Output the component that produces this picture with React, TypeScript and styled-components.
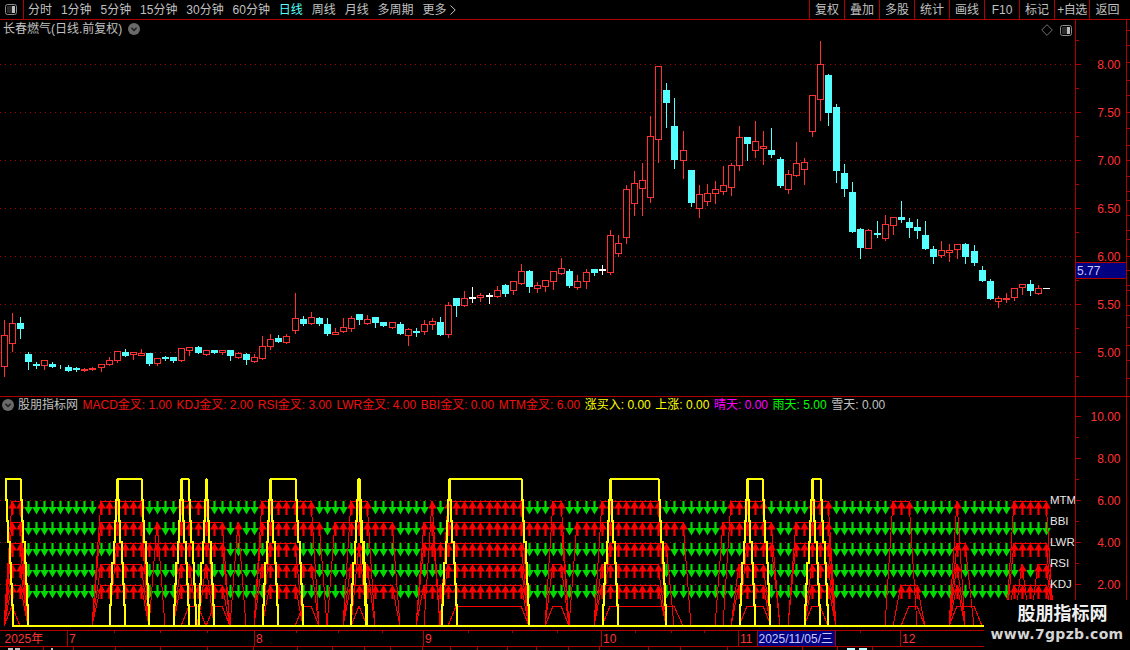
import React from "react";
import styled, { createGlobalStyle } from "styled-components";

const FONT = '"Liberation Sans", "Noto Sans CJK SC", sans-serif';
const RULE = "#b00000";
const UP = "#ff3232";
const DOWN = "#54ffff";

const Global = createGlobalStyle`
  html, body { margin: 0; padding: 0; background: #000; }
`;

const Screen = styled.div`
  position: relative;
  width: 1130px;
  height: 650px;
  overflow: hidden;
  background: #000;
  color: #c0c0c0;
  font: 12px/1 ${FONT};
  display: flex;
  flex-direction: column;
`;

const Toolbar = styled.div`
  height: 20px;
  flex: none;
  box-sizing: border-box;
  border-bottom: 1px solid ${RULE};
  display: flex;
  align-items: stretch;
`;
const ToggleCell = styled.div`
  width: 24px;
  box-sizing: border-box;
  border-right: 1px solid ${RULE};
  padding-left: 5px;
  display: flex;
  align-items: center;
`;
const Periods = styled.div`
  flex: 1;
  display: flex;
  align-items: center;
  gap: 8.9px;
  padding-left: 4px;
`;
const Period = styled.span<{ $active?: boolean }>`
  color: ${(p) => (p.$active ? "#54ffff" : "#c0c0c0")};
  display: inline-flex;
  align-items: center;
  gap: 4px;
`;
const Actions = styled.div`
  display: flex;
  align-items: stretch;
`;
const Action = styled.div<{ $last?: boolean; $tight?: boolean }>`
  width: ${(p) => (p.$last ? "41px" : "35px")};
  box-sizing: border-box;
  border-left: 1px solid ${RULE};
  padding-right: ${(p) => (p.$last ? "5px" : "0")};
  letter-spacing: ${(p) => (p.$tight ? "-0.5px" : "0")};
  display: flex;
  align-items: center;
  justify-content: center;
  white-space: nowrap;
`;

const Panel = styled.div<{ $h: number }>`
  position: relative;
  flex: none;
  height: ${(p) => p.$h}px;
`;
const ChartSvg = styled.svg`
  display: block;
  width: 1130px;
  height: 100%;
`;
const StockTitle = styled.div`
  position: absolute;
  left: 3px;
  top: 3px;
  display: flex;
  align-items: center;
  gap: 6px;
  height: 12px;
  white-space: nowrap;
`;
const CornerIcons = styled.div`
  position: absolute;
  right: 58px;
  top: 4px;
  display: flex;
  align-items: center;
  gap: 7px;
`;
const Legend = styled.div`
  position: absolute;
  left: 2px;
  top: 2px;
  display: flex;
  align-items: center;
  height: 12px;
  white-space: nowrap;
`;
const LegendName = styled.span`
  margin: 0 4.5px 0 4px;
  color: #c0c0c0;
`;
const LegendItem = styled.span<{ $c: string }>`
  color: ${(p) => p.$c};
  margin-right: 4.6px;
`;
const Watermark = styled.div`
  position: absolute;
  left: 984px;
  top: 600px;
  width: 146px;
  height: 50px;
  background: #000;
  display: flex;
  flex-direction: column;
  align-items: center;
`;
const MarkName = styled.div`
  margin: 1px 0 0 11px;
  font: bold 18px/22px "Noto Sans CJK SC", sans-serif;
  color: #f0f0f0;
`;
const MarkUrl = styled.div`
  margin-top: 3px;
  font: bold 14px/16px "DejaVu Sans", sans-serif;
  color: #d4d4d4;
  letter-spacing: 0.3px;
`;

const Rule = styled.line`
  stroke: ${RULE};
  stroke-width: 1;
  shape-rendering: crispEdges;
`;
const Grid = styled.line`
  stroke: #b00000;
  stroke-width: 1;
  stroke-dasharray: 1 4;
  shape-rendering: crispEdges;
`;
const AxisLabel = styled.text`
  fill: #ff3232;
  font: 12px ${FONT};
  text-anchor: end;
`;
const TimeLabel = styled.text`
  fill: #ff3232;
  font: 12px ${FONT};
`;
const DateText = styled.text`
  fill: #c8c8ff;
  font: 12px ${FONT};
`;
const Wick = styled.line<{ $c: string }>`
  stroke: ${(p) => p.$c};
  stroke-width: 1;
  shape-rendering: crispEdges;
`;
const Body = styled.rect<{ $c: string; $hollow: boolean }>`
  stroke: ${(p) => p.$c};
  fill: ${(p) => (p.$hollow ? "#000" : p.$c)};
  stroke-width: 1;
  shape-rendering: crispEdges;
`;
const NavyBox = styled.rect`
  fill: #000080;
`;
const Arrow = styled.polygon<{ $c: string }>`
  fill: ${(p) => p.$c};
`;
const SignalLine = styled.polyline`
  fill: none;
  stroke: #ff0000;
  stroke-width: 1;
  shape-rendering: crispEdges;
`;
const YellowLine = styled.path`
  fill: none;
  stroke: #ffff00;
  stroke-width: 2;
  shape-rendering: crispEdges;
`;
const RowTag = styled.text`
  fill: #e8e8e8;
  font: 11.5px ${FONT};
`;
const Crumb = styled.rect<{ $c: string }>`
  fill: ${(p) => p.$c};
`;

const PanelIcon = () => (
  <svg width="12" height="11" viewBox="0 0 12 11">
    <rect x="0.5" y="0.5" width="11" height="10" rx="2" fill="none" stroke="#8c8c8c" />
    <rect x="7" y="2" width="3" height="7" fill="#bdbdbd" />
    <rect x="2" y="2" width="5" height="7" fill="#2a2a2a" />
  </svg>
);
const Diamond = () => (
  <svg width="12" height="12" viewBox="0 0 12 12">
    <path d="M6 .7 11.3 6 6 11.3 .7 6Z" fill="none" stroke="#707070" />
  </svg>
);
const ChevronDot = () => (
  <svg width="12" height="12" viewBox="0 0 12 12" style={{ flex: "none" }}>
    <circle cx="6" cy="6" r="6" fill="#6a6a6a" />
    <path d="M3.4 4.8 6 7.4 8.6 4.8" fill="none" stroke="#1a1a1a" strokeWidth="1.4" />
  </svg>
);
const Caret = () => (
  <svg width="6" height="10" viewBox="0 0 6 10">
    <path d="M.5.5 5.2 5 .5 9.5" fill="none" stroke="#c0c0c0" />
  </svg>
);

type Tone = "r" | "c" | "w";
type Row = [Tone, number, number, number, number];
const seg = (oy: number, rows: Row[]): Row[] =>
  rows.map(([t, a, b, c, d]) => [
    t,
    Math.floor(oy + a / 3),
    Math.floor(oy + b / 3),
    Math.floor(oy + c / 3),
    Math.floor(oy + d / 3),
  ]);

const candles: Row[] = [
  ...seg(250, [
    ["r", 210, 256, 350, 380], ["r", 190, 220, 281, 305], ["c", 202, 220, 234, 264], ["c", 308, 312, 333, 357],
    ["c", 336, 342, 345, 354], ["r", 331, 331, 347, 357], ["c", 338, 342, 348, 351], ["c", 345, 345, 347, 354],
    ["c", 346, 351, 360, 363], ["c", 353, 356, 358, 363], ["r", 354, 357, 362, 363], ["r", 351, 354, 359, 360],
    ["r", 342, 343, 353, 363], ["r", 321, 331, 344, 345], ["r", 303, 304, 332, 336], ["c", 297, 306, 315, 318],
    ["r", 306, 307, 312, 327], ["r", 297, 309, 315, 316], ["c", 309, 309, 339, 345], ["r", 324, 325, 341, 345],
    ["c", 318, 323, 326, 332], ["c", 321, 321, 330, 336], ["r", 295, 295, 332, 333], ["r", 292, 292, 302, 315],
    ["c", 288, 291, 306, 309], ["r", 301, 301, 314, 315], ["c", 300, 300, 306, 309], ["r", 301, 301, 308, 312],
    ["c", 300, 300, 315, 330], ["r", 306, 310, 323, 324], ["c", 309, 312, 327, 342], ["r", 312, 322, 335, 336],
    ["r", 258, 289, 326, 329], ["r", 252, 268, 290, 297], ["c", 255, 264, 273, 276], ["r", 252, 259, 278, 279],
    ["r", 129, 205, 242, 249], ["c", 198, 207, 219, 225], ["r", 186, 202, 221, 222], ["c", 202, 204, 219, 225],
    ["c", 204, 222, 249, 255], ["r", 234, 246, 252, 252], ["r", 204, 232, 245, 246], ["r", 198, 205, 236, 243],
    ["c", 192, 192, 207, 222], ["r", 195, 208, 221, 222], ["c", 201, 201, 216, 231],
  ]),
  ...seg(230, [
    ["c", 276, 276, 285, 290], ["r", 276, 277, 293, 294], ["c", 276, 282, 309, 312], ["r", 294, 297, 317, 345],
    ["c", 294, 305, 308, 318], ["r", 270, 283, 305, 312], ["r", 264, 274, 282, 297], ["c", 261, 276, 312, 315],
    ["r", 216, 226, 314, 321], ["c", 204, 204, 225, 258], ["r", 183, 205, 227, 228], ["w", 171, 203, 206, 216],
    ["r", 189, 196, 201, 213], ["w", 189, 195, 198, 219], ["r", 168, 181, 200, 201], ["c", 162, 165, 189, 198],
    ["r", 153, 154, 182, 192], ["r", 102, 124, 161, 162], ["c", 120, 123, 168, 186], ["r", 156, 166, 176, 186],
    ["r", 150, 151, 170, 183], ["r", 124, 124, 155, 177], ["r", 84, 115, 131, 132], ["c", 117, 123, 165, 171],
    ["r", 135, 154, 173, 177], ["r", 117, 127, 155, 174], ["c", 117, 117, 126, 135], ["w", 105, 119, 122, 132],
    ["r", 0, 16, 128, 132], ["r", 15, 40, 71, 78],
  ]),
  ...seg(30, [
    ["r", 465, 478, 623, 641], ["r", 423, 460, 521, 555], ["r", 399, 451, 476, 555], ["r", 258, 319, 503, 516],
    ["r", 108, 109, 329, 396], ["c", 159, 180, 216, 291], ["c", 204, 288, 387, 414], ["r", 303, 361, 392, 444],
    ["c", 420, 420, 516, 528], ["r", 465, 493, 536, 561], ["r", 462, 490, 513, 525], ["r", 453, 478, 491, 519],
    ["r", 408, 466, 485, 492], ["r", 399, 406, 473, 495], ["r", 288, 322, 407, 420], ["c", 321, 321, 339, 390],
    ["r", 273, 334, 362, 381], ["r", 303, 349, 356, 402], ["c", 294, 360, 372, 381], ["c", 381, 387, 465, 471],
    ["r", 420, 433, 479, 489], ["r", 336, 400, 437, 438], ["r", 384, 397, 419, 462], ["r", 195, 196, 305, 318],
    ["r", 33, 103, 209, 270], ["c", 132, 135, 246, 285], ["c", 222, 231, 420, 456], ["c", 402, 429, 474, 498],
    ["c", 456, 486, 603, 606],
  ]),
  ...seg(180, [
    ["c", 144, 147, 201, 234], ["r", 148, 151, 204, 204], ["c", 123, 159, 162, 171], ["r", 105, 133, 174, 180],
    ["r", 112, 112, 137, 162], ["c", 63, 111, 117, 126], ["c", 114, 126, 141, 171], ["c", 117, 141, 150, 174],
    ["c", 123, 165, 204, 207], ["c", 198, 207, 228, 249], ["r", 183, 211, 225, 231], ["r", 192, 210, 216, 243],
    ["r", 193, 193, 209, 234], ["c", 189, 192, 228, 249], ["c", 195, 213, 246, 255], ["c", 258, 270, 300, 303],
    ["c", 297, 303, 354, 357], ["r", 348, 355, 365, 381], ["r", 339, 354, 359, 366], ["r", 324, 325, 353, 360],
    ["r", 312, 313, 323, 342], ["c", 300, 312, 330, 345], ["r", 315, 325, 341, 342],
  ]),
];

const xAt = (i: number) => 4 + 8 * i + Math.floor(i / 12);
const toneColor: Record<Tone, string> = { r: UP, c: DOWN, w: "#ffffff" };

type Span = [number, number];
const series: { name: string; y: number; on: Span[] }[] = [
  { name: "MTM", y: 501, on: [[1,2],[12,17],[22,25],[32,38],[43,45],[53,53],[55,64],[68,69],[74,81],[90,94],[100,102],[110,112],[118,118],[125,129]] },
  { name: "BBI", y: 522, on: [[1,2],[12,17],[19,19],[22,27],[29,29],[32,39],[41,48],[52,53],[55,69],[71,84],[89,95],[98,102]] },
  { name: "LWR", y: 543, on: [[1,2],[14,27],[33,36],[44,44],[52,64],[75,82],[92,95],[98,102],[118,119],[125,129]] },
  { name: "RSI", y: 564, on: [[1,2],[12,17],[22,23],[25,25],[32,38],[43,45],[55,64],[68,69],[74,81],[91,94],[100,102],[118,118],[126,126],[128,129]] },
  { name: "KDJ", y: 585, on: [[1,2],[12,17],[22,27],[33,36],[43,48],[52,64],[74,81],[91,94],[100,102],[111,113],[118,118],[125,129]] },
];
const macdOn: Span[] = [[1,1],[23,24],[26,27],[37,38],[44,44],[56,64],[68,69],[75,83],[92,94],[100,101],[112,113],[118,120]];
const BASE = 626;
const TOP = 479;

const spanPoints = ([a, b]: Span, y: number) =>
  `${xAt(a - 1)},${BASE} ${xAt(a)},${y} ${xAt(b)},${y} ${xAt(b + 1)},${BASE}`;

const stair = (x0: number, x1: number, up: boolean) => {
  let d = "";
  const n = 7;
  for (let k = 0; k < n; k++) {
    const x = Math.round(x0 + ((x1 - x0) * k) / (n - 1));
    const y = up ? BASE - 21 * k : TOP + 21 * k;
    const yEnd = up ? BASE - 21 * (k + 1) : TOP + 21 * (k + 1);
    d += `${k === 0 ? "M" : "L"}${x} ${y} L${x} ${yEnd} `;
  }
  return d;
};
const pulses: Span[] = [[5,21],[117,142],[181,189],[206,207],[270,296],[358,360],[449,522],[610,659],[747,763],[812,821]];

const yellowPath = () => {
  let d = `M12 ${BASE} L984 ${BASE} `;
  pulses.forEach(([l, r], idx) => {
    if (idx > 0) d += stair(l - 7, l, true);
    d += `M${l} ${TOP} L${r} ${TOP} `;
    d += stair(r, r + 7, false);
    d += stair(l + 1, l + 8, false);
  });
  return d;
};

const priceLevels = [8, 7.5, 7, 6.5, 6, 5.5, 5];
const lowerLevels = [10, 8, 6, 4, 2];
const edgeTicks = [30, 45, 62, 80, 95, 112, 128, 145, 160, 176, 191, 200, 215, 230, 256, 270, 285, 290, 305, 315, 327, 345, 360, 378];
const monthMarks: [number, string][] = [[67, "7"], [254, "8"], [423, "9"], [601, "10"], [738, "11"], [900, "12"]];
const axisTicks = [114, 160, 207, 296, 338, 382, 468, 512, 557, 635, 671, 704, 860];
const footTicks = [43, 73, 115, 160, 207, 253, 297, 332, 364, 390, 422, 450, 477, 507, 536, 568, 599, 648, 680, 727, 802, 837, 872];

const PriceChart = () => (
  <ChartSvg viewBox="0 20 1130 377" preserveAspectRatio="none">
    {priceLevels.map((_, k) => (
      <Grid key={k} x1={0} x2={1075} y1={64.5 + 48 * k} y2={64.5 + 48 * k} />
    ))}
    {candles.map(([t, wt, bt, bb, wb], i) => {
      const x = xAt(i);
      const c = toneColor[t];
      return (
        <g key={i}>
          <Wick $c={c} x1={x + 0.5} x2={x + 0.5} y1={wt} y2={wb + 1} />
          <Body $c={c} $hollow={t === "r"} x={x - 2.5} y={bt + 0.5} width={6} height={Math.max(bb - bt, 0)} />
        </g>
      );
    })}
    <Wick $c="#fff" x1={1043} x2={1050} y1={288.5} y2={288.5} />
    <Rule x1={1075.5} x2={1075.5} y1={20} y2={397} />
    <Rule x1={1126.5} x2={1126.5} y1={19} y2={397} />
    {priceLevels.map((p, k) => (
      <g key={p}>
        <Rule x1={1076} x2={1081} y1={64.5 + 48 * k} y2={64.5 + 48 * k} />
        <AxisLabel x={1120.5} y={69 + 48 * k}>{p.toFixed(2)}</AxisLabel>
      </g>
    ))}
    {[0, 1, 2, 3, 4, 5, 6, 7].map((k) => (
      <Rule key={k} x1={1076} x2={1079} y1={40.5 + 48 * k} y2={40.5 + 48 * k} />
    ))}
    {edgeTicks.map((y) => (
      <Rule key={y} x1={1127} x2={1130} y1={y + 0.5} y2={y + 0.5} />
    ))}
    <Rule x1={1127} x2={1130} y1={239.5} y2={239.5} />
    <NavyBox x={1076} y={262} width={50} height={16} />
    <Rule x1={1076} x2={1126} y1={262.5} y2={262.5} />
    <Rule x1={1076} x2={1126} y1={278.5} y2={278.5} />
    <DateText x={1077} y={274.5}>5.77</DateText>
    <Rule x1={0} x2={1130} y1={396.5} y2={396.5} />
  </ChartSvg>
);

const arrowPoints = (x: number, y: number, up: boolean) => {
  const c = x + 0.5;
  return up
    ? `${c},${y} ${c + 4.3},${y + 7.5} ${c + 1.1},${y + 7.5} ${c + 1.1},${y + 14} ${c - 1.1},${y + 14} ${c - 1.1},${y + 7.5} ${c - 4.3},${y + 7.5}`
    : `${c - 1.1},${y} ${c + 1.1},${y} ${c + 1.1},${y + 6} ${c + 4.3},${y + 6} ${c},${y + 13.5} ${c - 4.3},${y + 6} ${c - 1.1},${y + 6}`;
};

const IndicatorChart = () => (
  <ChartSvg viewBox="0 397 1130 233" preserveAspectRatio="none">
    {[500.5, 542.5, 584.5].map((y) => (
      <Grid key={y} x1={0} x2={1075} y1={y} y2={y} />
    ))}
    {series.map((s) =>
      Array.from({ length: 129 }, (_, n) => n + 1).map((i) => {
        const on = s.on.some(([a, b]) => i >= a && i <= b);
        return <Arrow key={s.name + i} $c={on ? "#ff0000" : "#00dc00"} points={arrowPoints(xAt(i), s.y, on)} />;
      })
    )}
    {series.map((s) =>
      s.on.map((span) => <SignalLine key={s.name + span[0]} points={spanPoints(span, s.y)} />)
    )}
    {macdOn.map((span) => (
      <SignalLine key={"m" + span[0]} points={spanPoints(span, 606)} />
    ))}
    <YellowLine d={yellowPath()} />
    {series.map((s) => (
      <RowTag key={s.name} x={1050} y={s.y + 3}>{s.name}</RowTag>
    ))}
    <Rule x1={1075.5} x2={1075.5} y1={397} y2={600} />
    <Rule x1={1126.5} x2={1126.5} y1={397} y2={600} />
    {lowerLevels.map((p, k) => (
      <g key={p}>
        <Rule x1={1076} x2={1081} y1={416.5 + 42 * k} y2={416.5 + 42 * k} />
        <Rule x1={1076} x2={1079} y1={437.5 + 42 * k} y2={437.5 + 42 * k} />
        <AxisLabel x={1120.5} y={421 + 42 * k}>{p.toFixed(2)}</AxisLabel>
      </g>
    ))}
  </ChartSvg>
);

const TimeAxis = () => (
  <ChartSvg viewBox="0 630 1130 20" preserveAspectRatio="none">
    <Rule x1={0} x2={984} y1={630.5} y2={630.5} />
    <Rule x1={0} x2={984} y1={646.5} y2={646.5} />
    <TimeLabel x={4.5} y={643}>2025年</TimeLabel>
    {monthMarks.map(([x, t]) => (
      <g key={t}>
        <Rule x1={x + 0.5} x2={x + 0.5} y1={631} y2={646} />
        <TimeLabel x={x + 2} y={643}>{t}</TimeLabel>
      </g>
    ))}
    {axisTicks.map((x) => (
      <Rule key={x} x1={x + 0.5} x2={x + 0.5} y1={631} y2={633} />
    ))}
    <NavyBox x={758} y={631} width={77} height={15} />
    <Rule x1={757.5} x2={757.5} y1={631} y2={646} />
    <Rule x1={835.5} x2={835.5} y1={631} y2={646} />
    <DateText x={758.5} y={643}>2025/11/05/三</DateText>
    {footTicks.map((x) => (
      <Rule key={x} x1={x + 0.5} x2={x + 0.5} y1={647} y2={650} />
    ))}
    <Crumb $c="#c0c0c0" x={8} y={648} width={5} height={2} />
    <Crumb $c="#c0c0c0" x={15} y={648} width={5} height={2} />
    <Crumb $c="#c0c0c0" x={51} y={648} width={2} height={2} />
    <Crumb $c="#bfffff" x={847} y={648} width={8} height={2} />
    <Crumb $c="#bfffff" x={859} y={648} width={8} height={2} />
  </ChartSvg>
);

const periods = ["分时", "1分钟", "5分钟", "15分钟", "30分钟", "60分钟", "日线", "周线", "月线", "多周期"];
const actions = ["复权", "叠加", "多股", "统计", "画线", "F10", "标记"];
const legend: [string, string][] = [
  ["MACD金叉: 1.00", "#f01010"],
  ["KDJ金叉: 2.00", "#f01010"],
  ["RSI金叉: 3.00", "#f01010"],
  ["LWR金叉: 4.00", "#f01010"],
  ["BBI金叉: 0.00", "#f01010"],
  ["MTM金叉: 6.00", "#f01010"],
  ["涨买入: 0.00", "#ffff00"],
  ["上涨: 0.00", "#ffff00"],
  ["晴天: 0.00", "#ff00ff"],
  ["雨天: 5.00", "#00ff00"],
  ["雪天: 0.00", "#c0c0c0"],
];

export default function App() {
  return (
    <Screen>
      <Global />
      <Toolbar>
        <ToggleCell><PanelIcon /></ToggleCell>
        <Periods>
          {periods.map((p) => (
            <Period key={p} $active={p === "日线"}>{p}</Period>
          ))}
          <Period>更多<Caret /></Period>
        </Periods>
        <Actions>
          {actions.map((a) => (
            <Action key={a}>{a}</Action>
          ))}
          <Action $tight>+自选</Action>
          <Action $last>返回</Action>
        </Actions>
      </Toolbar>
      <Panel $h={377}>
        <PriceChart />
        <StockTitle>长春燃气(日线.前复权)<ChevronDot /></StockTitle>
        <CornerIcons><Diamond /><PanelIcon /></CornerIcons>
      </Panel>
      <Panel $h={233}>
        <IndicatorChart />
        <Legend>
          <ChevronDot />
          <LegendName>股朋指标网</LegendName>
          {legend.map(([t, c]) => (
            <LegendItem key={t} $c={c}>{t}</LegendItem>
          ))}
        </Legend>
      </Panel>
      <Panel $h={20}>
        <TimeAxis />
      </Panel>
      <Watermark>
        <MarkName>股朋指标网</MarkName>
        <MarkUrl>www.7gpzb.com</MarkUrl>
      </Watermark>
    </Screen>
  );
}
